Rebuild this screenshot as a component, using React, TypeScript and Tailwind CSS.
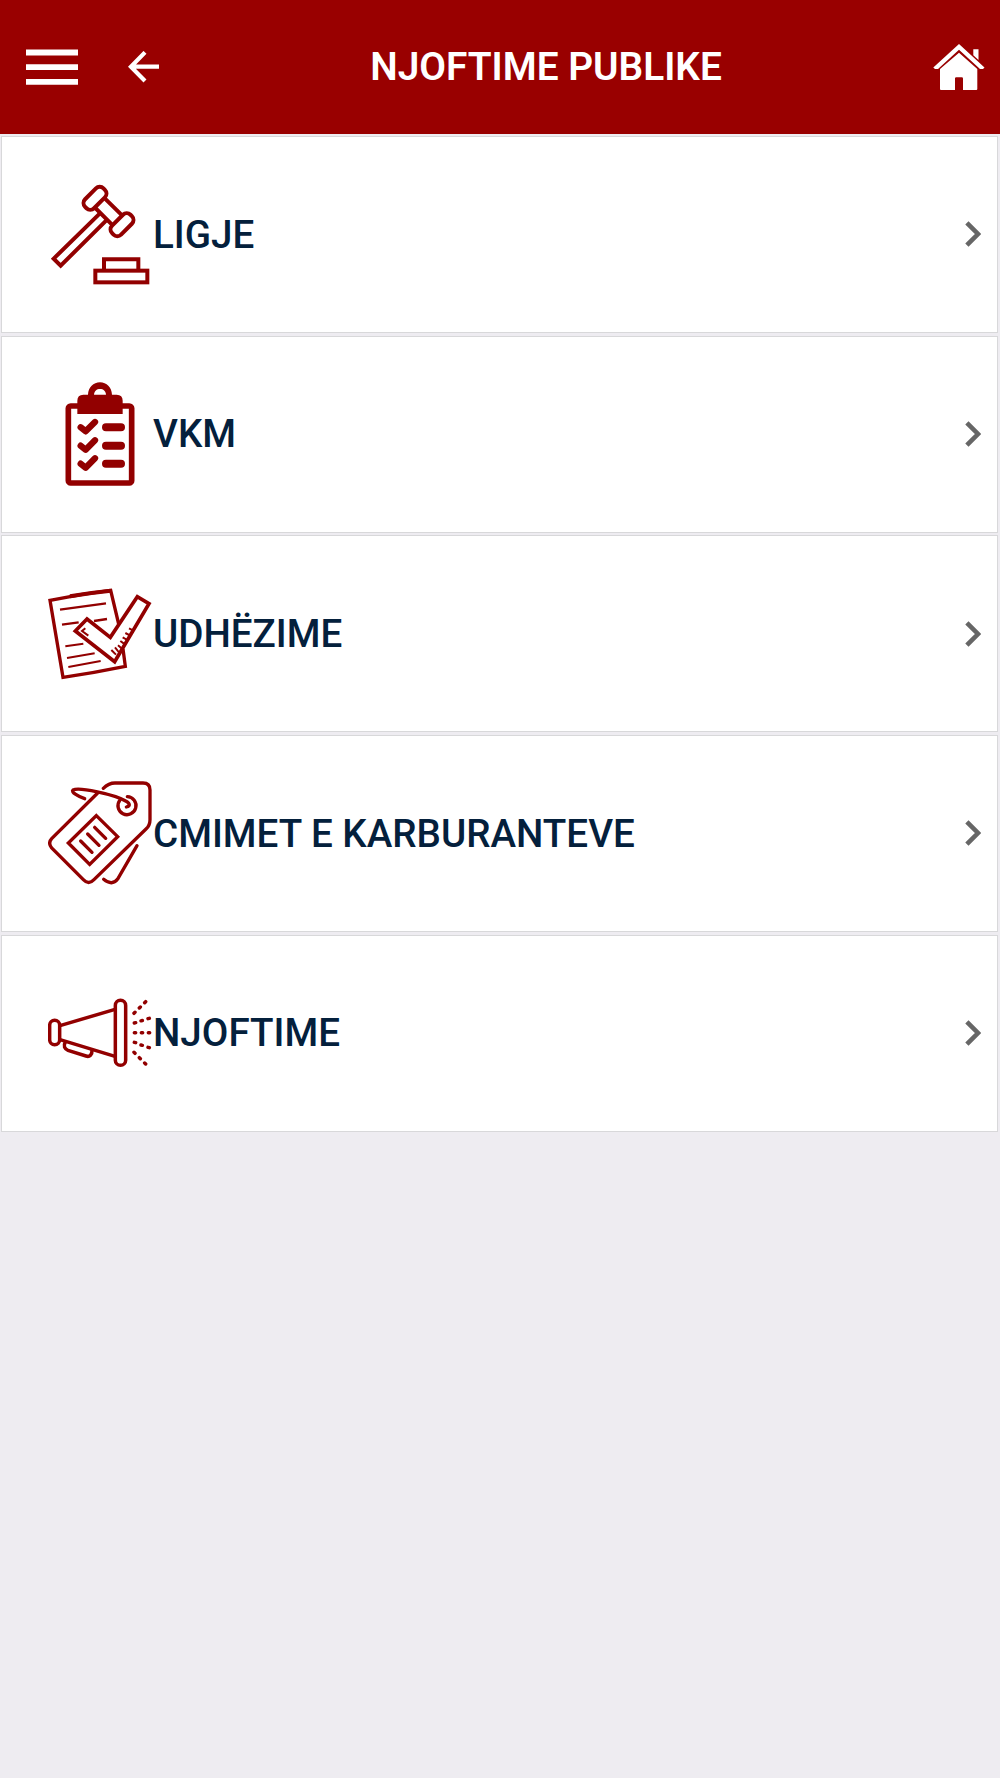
import React from "react";

const GavelIcon: React.FC = () => (
  <svg
    viewBox="54 35 312 312"
    className="h-[104px] w-[104px] shrink-0"
    fill="none"
    stroke="#920000"
    strokeWidth={12}
  >
    <rect x={-39} y={-19} width={78} height={38} rx={16} transform="translate(195 84) rotate(-45)" />
    <rect x={-39} y={-19} width={78} height={38} rx={16} transform="translate(276 163) rotate(-45)" />
    <path d="M222 82L277 136M193 110L246 163" />
    <path d="M209 130L71 265L92 286L229 150" />
    <path d="M222 300V267H325V300" />
    <rect x={196} y={301} width={156} height={35} />
  </svg>
);

const ClipboardIcon: React.FC = () => (
  <svg
    viewBox="54 36 312 312"
    className="h-[104px] w-[104px] shrink-0"
    fill="none"
    stroke="#920000"
  >
    <rect x={115} y={108} width={190} height={231} rx={7} strokeWidth={17} />
    <path
      d="M142 132V92Q142 74 160 74H174C175 52 190 37 210 37S245 52 246 74H260Q278 74 278 92V132Z"
      fill="#920000"
      stroke="none"
    />
    <path d="M192 74C193 63 200 57 210 57S227 63 228 74Z" fill="#fff" stroke="none" />
    <g strokeLinecap="round" strokeLinejoin="round">
      <path
        d="M152 172L167 184L195 156M152 227L167 239L195 211M152 281L167 293L195 265"
        strokeWidth={19}
      />
      <path d="M228 172H273M228 227H273M228 281H273" strokeWidth={24} />
    </g>
  </svg>
);

const GuideIcon: React.FC = () => (
  <svg
    viewBox="54 36 312 312"
    className="h-[104px] w-[104px] shrink-0"
    fill="none"
    stroke="#920000"
    strokeWidth={10}
  >
    <path d="M266 162L242 61Q150 72 60 91L99 322Q194 308 286 289L279 237" />
    <path d="M242 62Q180 68 120 79" strokeWidth={12} />
    <path d="M90 119L228 100" strokeWidth={7} />
    <path d="M96 164L146 157M192 153L231 147" strokeWidth={7} />
    <path d="M106 229L160 221M111 264L194 250M115 291L212 273" strokeWidth={6} />
    <path d="M171 147L136 183L254 275L357 101L322 80L241 202Z" fill="#fff" strokeWidth={11} />
    <path
      d="M175 197L156 183L166 175M244 240L258 254M255 232L266 246M264 226L277 237M271 213L285 223M278 202L292 210M286 189L301 197M297 175L309 181"
      strokeWidth={6}
    />
  </svg>
);

const PriceTagIcon: React.FC = () => (
  <svg
    viewBox="54 34 312 312"
    className="h-[104px] w-[104px] shrink-0"
    fill="none"
    stroke="#920000"
    strokeWidth={10}
    strokeLinecap="round"
  >
    <path d="M203 70L65 207Q53 220 65 235L160 330Q176 347 192 330L348 178Q360 167 360 150V61Q360 40 339 40H255Q236 40 220 56" />
    <path d="M164 87C143 80 122 67 129 61C148 52 252 74 287 94C300 101 302 109 289 112" />
    <path d="M270 91A27 27 0 1 0 292 81" />
    <path d="M199 138L263 201L179 284L115 220Z" strokeLinejoin="miter" />
    <path d="M152 214L186 248M173 193L207 227M194 173L227 206" />
    <path d="M321 228L263 328Q246 350 221 329" />
  </svg>
);

const MegaphoneIcon: React.FC = () => (
  <svg
    viewBox="54 4 312 312"
    className="h-[104px] w-[104px] shrink-0"
    fill="none"
    stroke="#920000"
    strokeWidth={10.5}
    strokeLinecap="round"
  >
    <rect x={59} y={122} width={30} height={73} rx={15} />
    <rect x={256} y={62} width={31} height={195} rx={15.5} />
    <path d="M90 138L255 89M90 180L255 230" strokeLinecap="butt" />
    <path d="M106 187C99 199 104 208 114 212L168 229C179 233 187 225 186 211" />
    <path
      d="M312 101L315 98M328 85L331 82M344 69L347 66M313 130L317 129M333 123.5L337 122.5M354 117L358 116M313 159H317M334 159H338M355 159H359M313 188L317 189M333 196L337 197M354 203L358 204M312 218L315 221M328 234L331 237M344 250L347 253"
    />
  </svg>
);

const items = [
  { title: "LIGJE", Icon: GavelIcon },
  { title: "VKM", Icon: ClipboardIcon },
  { title: "UDHËZIME", Icon: GuideIcon },
  { title: "CMIMET E KARBURANTEVE", Icon: PriceTagIcon },
  { title: "NJOFTIME", Icon: MegaphoneIcon },
];

const Header: React.FC = () => (
  <header className="flex h-[133.6px] items-center bg-[#990000] text-white">
    <button className="ml-[26px]" aria-label="Menu">
      <svg viewBox="0 0 52 36" className="h-9 w-[52px]" fill="currentColor">
        <path d="M0 .6H52V6.4H0ZM0 15.2H52V21H0ZM0 29.9H52V35.7H0Z" />
      </svg>
    </button>
    <button className="ml-[50px]" aria-label="Back">
      <svg
        viewBox="0 0 32 32"
        className="h-8 w-8"
        fill="none"
        stroke="currentColor"
        strokeWidth={4.2}
      >
        <path d="M17 1.4L2.9 15.7L17 30M3 15.7H31" />
      </svg>
    </button>
    <h1 className="flex-1 pt-[1.5px] pr-px text-center text-[38.8px] leading-none font-semibold whitespace-nowrap">
      NJOFTIME PUBLIKE
    </h1>
    <button className="mr-[15px]" aria-label="Home">
      <svg viewBox="0 0 52 46" className="h-[46px] w-[52px]" fill="currentColor">
        <path d="M26 0L51.5 23.5L50 25H47L26 5.8L5 25H2L.3 23.5Z" />
        <path d="M40.3 5.2H45.5V16L40.3 11.2Z" />
        <path d="M26 8.7L44.3 25V45Q44.3 46 43.3 46H30V34.5Q30 33.3 28.8 33.3H23.2Q22 33.3 22 34.5V46H8Q7 46 7 45V25Z" />
      </svg>
    </button>
  </header>
);

const App: React.FC = () => {
  return (
    <div
      className="min-h-screen bg-[#eeecf1]"
      style={{ fontFamily: "Roboto, sans-serif" }}
    >
      <Header />
      <main className="flex flex-col gap-[2.65px] pr-[2px] pl-px pt-[2.4px]">
        {items.map(({ title, Icon }) => (
          <button
            key={title}
            className="flex h-[197px] w-full items-center border border-[#d8d8da] bg-white pr-4 pl-[46px] text-left"
          >
            <Icon />
            <span className="pt-px pl-[1px] text-[38.6px] leading-none font-medium whitespace-nowrap text-[#04203c]">
              {title}
            </span>
            <svg
              viewBox="0 0 16 26"
              className="ml-auto h-[26px] w-4"
              fill="none"
              stroke="#666"
              strokeWidth={4.6}
            >
              <path d="M1.9 1.8L13 13L1.9 24.2" />
            </svg>
          </button>
        ))}
      </main>
    </div>
  );
};

export default App;
